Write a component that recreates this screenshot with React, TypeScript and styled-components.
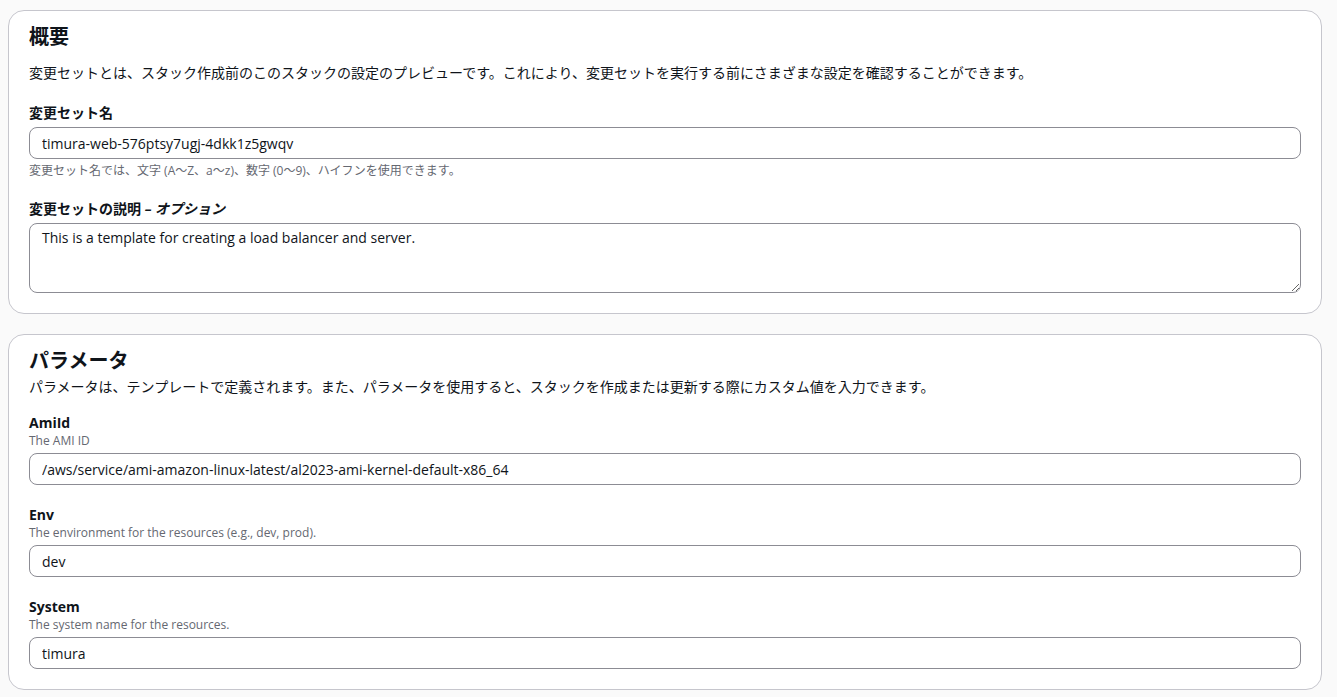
import styled, { createGlobalStyle } from 'styled-components';

const GlobalStyle = createGlobalStyle`
  html, body {
    margin: 0;
    padding: 0;
    background: #fafafa;
  }
  body {
    font-family: 'Open Sans', 'Noto Sans CJK JP', sans-serif;
    color: #0f141a;
    -webkit-font-smoothing: antialiased;
  }
`;

const Page = styled.div`
  display: flex;
  flex-direction: column;
  gap: 20px;
  padding: 10px 15px 8px 8px;
`;

const Container = styled.section`
  background: #ffffff;
  border: 1px solid #c6c6cd;
  border-radius: 16px;
  padding: 14px 20px 20px;
  display: flex;
  flex-direction: column;
`;

const Heading = styled.h2`
  margin: 0;
  font-size: 20px;
  line-height: 24px;
  font-weight: 700;
  color: #0f141a;
`;

const Description = styled.p<{ $inBody?: boolean }>`
  margin: ${({ $inBody }) => ($inBody ? '14px 0 0' : '4px 0 0')};
  font-size: 14px;
  line-height: 20px;
  color: #0f141a;
`;

const Fields = styled.div<{ $top: number }>`
  display: flex;
  flex-direction: column;
  gap: 20px;
  margin-top: ${({ $top }) => $top}px;
`;

const Field = styled.div`
  display: flex;
  flex-direction: column;
`;

const Label = styled.label`
  font-size: 14px;
  line-height: 20px;
  font-weight: 700;
  color: #0f141a;

  i {
    font-style: italic;
  }
`;

const Constraint = styled.div`
  font-size: 12px;
  line-height: 16px;
  color: #656871;
`;

const FieldHint = styled(Constraint)`
  margin-top: 4px;
`;

const Control = styled.div`
  margin-top: 4px;
`;

const TextInput = styled.input`
  box-sizing: border-box;
  display: block;
  width: 100%;
  height: 32px;
  padding: 0 12px;
  border: 1px solid #8c8c94;
  border-radius: 8px;
  background: #ffffff;
  font-family: 'Open Sans', 'Noto Sans CJK JP', sans-serif;
  font-size: 14px;
  color: #0f141a;
  outline: none;
`;

const TextArea = styled.textarea`
  box-sizing: border-box;
  display: block;
  width: 100%;
  height: 70px;
  padding: 4px 12px;
  border: 1px solid #8c8c94;
  border-radius: 8px;
  background: #ffffff;
  font-family: 'Open Sans', 'Noto Sans CJK JP', sans-serif;
  font-size: 14px;
  line-height: 20px;
  color: #0f141a;
  outline: none;
  resize: vertical;
`;

interface Param {
  name: string;
  description: string;
  value: string;
}

const params: Param[] = [
  { name: 'AmiId', description: 'The AMI ID', value: '/aws/service/ami-amazon-linux-latest/al2023-ami-kernel-default-x86_64' },
  { name: 'Env', description: 'The environment for the resources (e.g., dev, prod).', value: 'dev' },
  { name: 'System', description: 'The system name for the resources.', value: 'timura' },
];

export default function App() {
  return (
    <>
      <GlobalStyle />
      <Page>
        <Container>
          <Heading>概要</Heading>
          <Description $inBody>
            変更セットとは、スタック作成前のこのスタックの設定のプレビューです。これにより、変更セットを実行する前にさまざまな設定を確認することができます。
          </Description>
          <Fields $top={20}>
            <Field>
              <Label>変更セット名</Label>
              <Control>
                <TextInput defaultValue="timura-web-576ptsy7ugj-4dkk1z5gwqv" />
              </Control>
              <FieldHint>変更セット名では、文字 (A～Z、a～z)、数字 (0～9)、ハイフンを使用できます。</FieldHint>
            </Field>
            <Field>
              <Label>
                変更セットの説明 <i>– オプション</i>
              </Label>
              <Control>
                <TextArea defaultValue="This is a template for creating a load balancer and server." />
              </Control>
            </Field>
          </Fields>
        </Container>

        <Container>
          <Heading>パラメータ</Heading>
          <Description>
            パラメータは、テンプレートで定義されます。また、パラメータを使用すると、スタックを作成または更新する際にカスタム値を入力できます。
          </Description>
          <Fields $top={16}>
            {params.map((p) => (
              <Field key={p.name}>
                <Label>{p.name}</Label>
                <Constraint>{p.description}</Constraint>
                <Control>
                  <TextInput defaultValue={p.value} />
                </Control>
              </Field>
            ))}
          </Fields>
        </Container>
      </Page>
    </>
  );
}
